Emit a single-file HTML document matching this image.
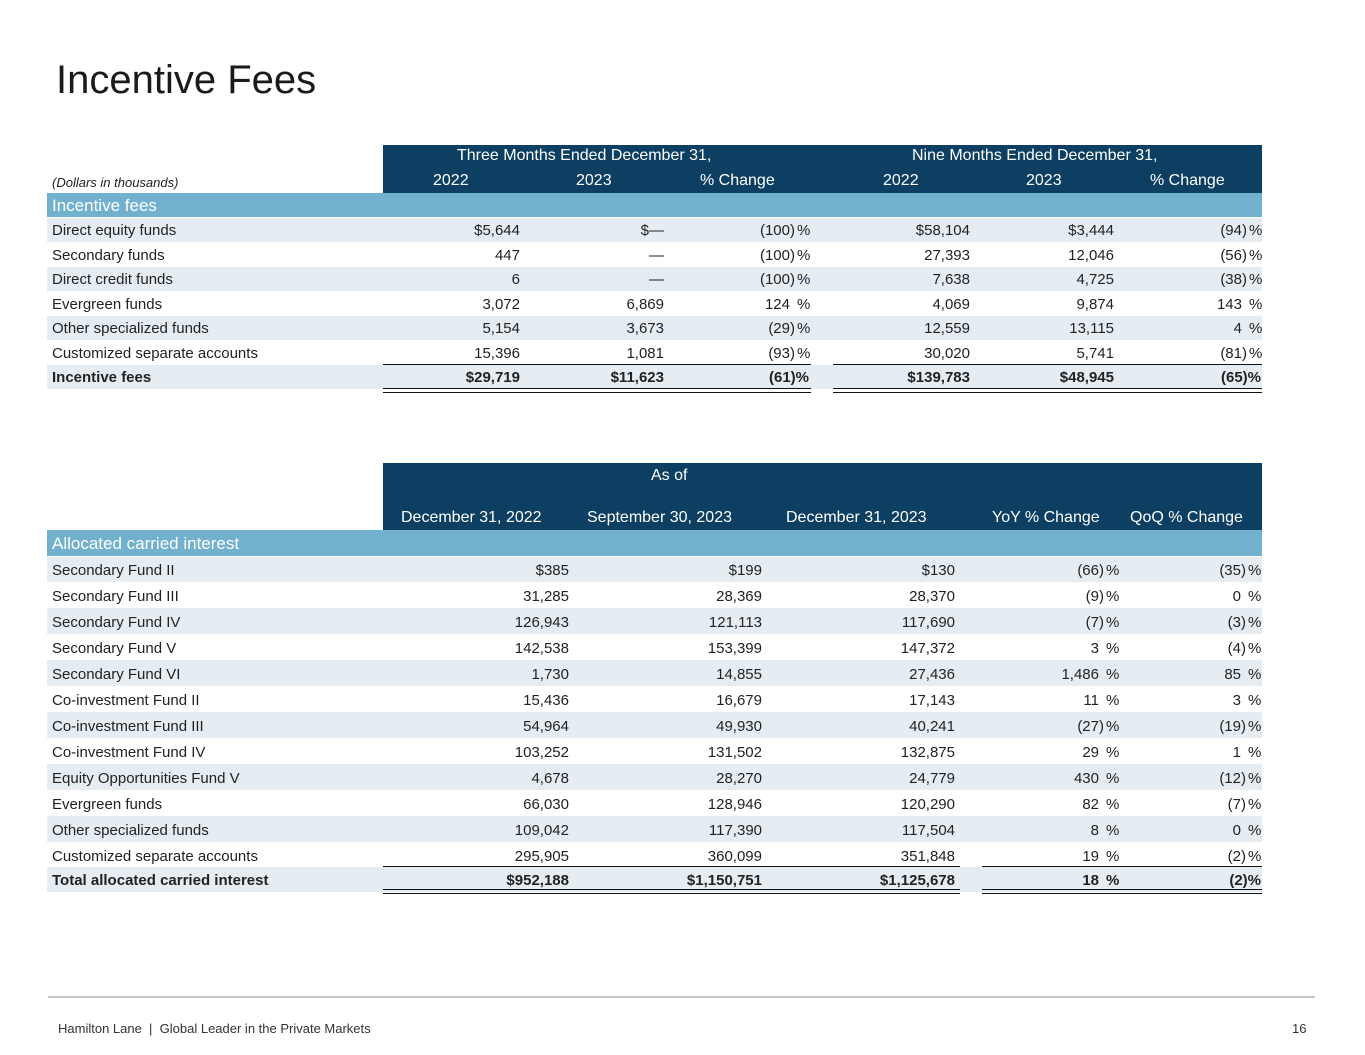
<!DOCTYPE html>
<html><head><meta charset="utf-8"><style>
*{margin:0;padding:0;box-sizing:border-box}
body{width:1365px;height:1055px;position:relative;background:#fff;font-family:"Liberation Sans",sans-serif;color:#222;overflow:hidden}
.a{position:absolute;white-space:nowrap}
.t{font-size:15px;line-height:1}
.nav{background:#0c3f61;color:#fff}
.sec{background:#72b1ce;color:#fff;font-size:17px}
.lt{background:#e5edf3}
.b{font-weight:bold}
.ln{position:absolute;height:0;border-top:1.5px solid #111}
.dl{position:absolute;height:5px;border-top:1.5px solid #111;border-bottom:1.5px solid #111}
.w{position:absolute;left:0;top:0;width:1365px;height:1055px}
</style></head><body>
<div class="w">
<div class="a" style="left:56px;top:58px;font-size:40px;color:#1a1a1a">Incentive Fees</div>

<div class="a nav" style="left:383px;top:145px;width:879px;height:48px"></div>
<div class="a t" style="left:457px;top:148px;color:#fff;font-size:16px">Three Months Ended December 31,</div>
<div class="a t" style="left:912px;top:148px;color:#fff;font-size:16px">Nine Months Ended December 31,</div>
<div class="a" style="left:52px;top:175px;font-size:13px;font-style:italic">(Dollars in thousands)</div>
<div class="a t" style="left:433px;top:173px;color:#fff;font-size:16px">2022</div>
<div class="a t" style="left:576px;top:173px;color:#fff;font-size:16px">2023</div>
<div class="a t" style="left:700px;top:173px;color:#fff;font-size:16px">% Change</div>
<div class="a t" style="left:883px;top:173px;color:#fff;font-size:16px">2022</div>
<div class="a t" style="left:1026px;top:173px;color:#fff;font-size:16px">2023</div>
<div class="a t" style="left:1150px;top:173px;color:#fff;font-size:16px">% Change</div>
<div class="a sec" style="left:47px;top:193px;width:1215px;height:24px;padding:3px 0 0 5px">Incentive fees</div>

<div class="a nav" style="left:383px;top:463px;width:879px;height:67px"></div>
<div class="a t" style="left:651px;top:468px;color:#fff;font-size:16px">As of</div>
<div class="a t" style="left:401px;top:510px;color:#fff;font-size:16px">December 31, 2022</div>
<div class="a t" style="left:587px;top:510px;color:#fff;font-size:16px">September 30, 2023</div>
<div class="a t" style="left:786px;top:510px;color:#fff;font-size:16px">December 31, 2023</div>
<div class="a t" style="left:992px;top:510px;color:#fff;font-size:16px">YoY % Change</div>
<div class="a t" style="left:1130px;top:510px;color:#fff;font-size:16px">QoQ % Change</div>
<div class="a sec" style="left:47px;top:530px;width:1215px;height:26px;padding:4px 0 0 5px">Allocated carried interest</div>

<div class="a" style="left:48px;top:996px;width:1267px;height:2px;background:#c8c8c8"></div>
<div class="a" style="left:58px;top:1021px;font-size:13px;color:#333">Hamilton Lane &nbsp;|&nbsp; Global Leader in the Private Markets</div>
<div class="a" style="left:1292px;top:1021px;font-size:13px;color:#333">16</div>

<div class="a lt" style="left:47px;top:218px;width:1215px;height:24px"></div>
<div class="a lt" style="left:47px;top:267px;width:1215px;height:24px"></div>
<div class="a lt" style="left:47px;top:316px;width:1215px;height:24px"></div>
<div class="a lt" style="left:47px;top:365px;width:1215px;height:24px"></div>

<div class="a lt" style="left:47px;top:557px;width:1215px;height:25px"></div>
<div class="a lt" style="left:47px;top:608px;width:1215px;height:26px"></div>
<div class="a lt" style="left:47px;top:660px;width:1215px;height:26px"></div>
<div class="a lt" style="left:47px;top:712px;width:1215px;height:26px"></div>
<div class="a lt" style="left:47px;top:764px;width:1215px;height:26px"></div>
<div class="a lt" style="left:47px;top:816px;width:1215px;height:26px"></div>
<div class="a lt" style="left:47px;top:867px;width:1215px;height:25px"></div>

<div class="ln" style="left:383px;top:364px;width:428px"></div>
<div class="ln" style="left:833px;top:364px;width:429px"></div>
<div class="dl" style="left:383px;top:388px;width:428px"></div>
<div class="dl" style="left:833px;top:388px;width:429px"></div>
<div class="ln" style="left:383px;top:866px;width:577px"></div>
<div class="ln" style="left:982px;top:866px;width:280px"></div>
<div class="dl" style="left:383px;top:889px;width:577px"></div>
<div class="dl" style="left:982px;top:889px;width:280px"></div>
</div>

<div class="w">
<div class="a t" style="left:52px;top:223px">Direct equity funds</div>
<div class="a t" style="right:845px;top:223px">$5,644</div><div class="a t" style="right:701px;top:223px">$—</div><div class="a t" style="right:570px;top:223px">(100)</div><div class="a t" style="left:797px;top:223px">%</div><div class="a t" style="right:395px;top:223px">$58,104</div><div class="a t" style="right:251px;top:223px">$3,444</div><div class="a t" style="right:118px;top:223px">(94)</div><div class="a t" style="left:1249px;top:223px">%</div>

<div class="a t" style="left:52px;top:248px">Secondary funds</div>
<div class="a t" style="right:845px;top:248px">447</div><div class="a t" style="right:701px;top:248px">—</div><div class="a t" style="right:570px;top:248px">(100)</div><div class="a t" style="left:797px;top:248px">%</div><div class="a t" style="right:395px;top:248px">27,393</div><div class="a t" style="right:251px;top:248px">12,046</div><div class="a t" style="right:118px;top:248px">(56)</div><div class="a t" style="left:1249px;top:248px">%</div>

<div class="a t" style="left:52px;top:272px">Direct credit funds</div>
<div class="a t" style="right:845px;top:272px">6</div><div class="a t" style="right:701px;top:272px">—</div><div class="a t" style="right:570px;top:272px">(100)</div><div class="a t" style="left:797px;top:272px">%</div><div class="a t" style="right:395px;top:272px">7,638</div><div class="a t" style="right:251px;top:272px">4,725</div><div class="a t" style="right:118px;top:272px">(38)</div><div class="a t" style="left:1249px;top:272px">%</div>

<div class="a t" style="left:52px;top:297px">Evergreen funds</div>
<div class="a t" style="right:845px;top:297px">3,072</div><div class="a t" style="right:701px;top:297px">6,869</div><div class="a t" style="right:575px;top:297px">124</div><div class="a t" style="left:797px;top:297px">%</div><div class="a t" style="right:395px;top:297px">4,069</div><div class="a t" style="right:251px;top:297px">9,874</div><div class="a t" style="right:123px;top:297px">143</div><div class="a t" style="left:1249px;top:297px">%</div>

<div class="a t" style="left:52px;top:321px">Other specialized funds</div>
<div class="a t" style="right:845px;top:321px">5,154</div><div class="a t" style="right:701px;top:321px">3,673</div><div class="a t" style="right:570px;top:321px">(29)</div><div class="a t" style="left:797px;top:321px">%</div><div class="a t" style="right:395px;top:321px">12,559</div><div class="a t" style="right:251px;top:321px">13,115</div><div class="a t" style="right:123px;top:321px">4</div><div class="a t" style="left:1249px;top:321px">%</div>

<div class="a t" style="left:52px;top:346px">Customized separate accounts</div>
<div class="a t" style="right:845px;top:346px">15,396</div><div class="a t" style="right:701px;top:346px">1,081</div><div class="a t" style="right:570px;top:346px">(93)</div><div class="a t" style="left:797px;top:346px">%</div><div class="a t" style="right:395px;top:346px">30,020</div><div class="a t" style="right:251px;top:346px">5,741</div><div class="a t" style="right:118px;top:346px">(81)</div><div class="a t" style="left:1249px;top:346px">%</div>

<div class="a t b" style="left:52px;top:370px">Incentive fees</div>
<div class="a t b" style="right:845px;top:370px">$29,719</div><div class="a t b" style="right:701px;top:370px">$11,623</div><div class="a t b" style="right:556px;top:370px">(61)%</div><div class="a t b" style="right:395px;top:370px">$139,783</div><div class="a t b" style="right:251px;top:370px">$48,945</div><div class="a t b" style="right:104px;top:370px">(65)%</div>

<div class="a t" style="left:52px;top:563px">Secondary Fund II</div><div class="a t" style="right:796px;top:563px">$385</div><div class="a t" style="right:603px;top:563px">$199</div><div class="a t" style="right:410px;top:563px">$130</div><div class="a t" style="right:261px;top:563px">(66)</div><div class="a t" style="left:1106px;top:563px">%</div><div class="a t" style="right:119px;top:563px">(35)</div><div class="a t" style="left:1248px;top:563px">%</div>
<div class="a t" style="left:52px;top:589px">Secondary Fund III</div><div class="a t" style="right:796px;top:589px">31,285</div><div class="a t" style="right:603px;top:589px">28,369</div><div class="a t" style="right:410px;top:589px">28,370</div><div class="a t" style="right:261px;top:589px">(9)</div><div class="a t" style="left:1106px;top:589px">%</div><div class="a t" style="right:124px;top:589px">0</div><div class="a t" style="left:1248px;top:589px">%</div>
<div class="a t" style="left:52px;top:615px">Secondary Fund IV</div><div class="a t" style="right:796px;top:615px">126,943</div><div class="a t" style="right:603px;top:615px">121,113</div><div class="a t" style="right:410px;top:615px">117,690</div><div class="a t" style="right:261px;top:615px">(7)</div><div class="a t" style="left:1106px;top:615px">%</div><div class="a t" style="right:119px;top:615px">(3)</div><div class="a t" style="left:1248px;top:615px">%</div>
<div class="a t" style="left:52px;top:641px">Secondary Fund V</div><div class="a t" style="right:796px;top:641px">142,538</div><div class="a t" style="right:603px;top:641px">153,399</div><div class="a t" style="right:410px;top:641px">147,372</div><div class="a t" style="right:266px;top:641px">3</div><div class="a t" style="left:1106px;top:641px">%</div><div class="a t" style="right:119px;top:641px">(4)</div><div class="a t" style="left:1248px;top:641px">%</div>
<div class="a t" style="left:52px;top:667px">Secondary Fund VI</div><div class="a t" style="right:796px;top:667px">1,730</div><div class="a t" style="right:603px;top:667px">14,855</div><div class="a t" style="right:410px;top:667px">27,436</div><div class="a t" style="right:266px;top:667px">1,486</div><div class="a t" style="left:1106px;top:667px">%</div><div class="a t" style="right:124px;top:667px">85</div><div class="a t" style="left:1248px;top:667px">%</div>
<div class="a t" style="left:52px;top:693px">Co-investment Fund II</div><div class="a t" style="right:796px;top:693px">15,436</div><div class="a t" style="right:603px;top:693px">16,679</div><div class="a t" style="right:410px;top:693px">17,143</div><div class="a t" style="right:266px;top:693px">11</div><div class="a t" style="left:1106px;top:693px">%</div><div class="a t" style="right:124px;top:693px">3</div><div class="a t" style="left:1248px;top:693px">%</div>
<div class="a t" style="left:52px;top:719px">Co-investment Fund III</div><div class="a t" style="right:796px;top:719px">54,964</div><div class="a t" style="right:603px;top:719px">49,930</div><div class="a t" style="right:410px;top:719px">40,241</div><div class="a t" style="right:261px;top:719px">(27)</div><div class="a t" style="left:1106px;top:719px">%</div><div class="a t" style="right:119px;top:719px">(19)</div><div class="a t" style="left:1248px;top:719px">%</div>
<div class="a t" style="left:52px;top:745px">Co-investment Fund IV</div><div class="a t" style="right:796px;top:745px">103,252</div><div class="a t" style="right:603px;top:745px">131,502</div><div class="a t" style="right:410px;top:745px">132,875</div><div class="a t" style="right:266px;top:745px">29</div><div class="a t" style="left:1106px;top:745px">%</div><div class="a t" style="right:124px;top:745px">1</div><div class="a t" style="left:1248px;top:745px">%</div>
<div class="a t" style="left:52px;top:771px">Equity Opportunities Fund V</div><div class="a t" style="right:796px;top:771px">4,678</div><div class="a t" style="right:603px;top:771px">28,270</div><div class="a t" style="right:410px;top:771px">24,779</div><div class="a t" style="right:266px;top:771px">430</div><div class="a t" style="left:1106px;top:771px">%</div><div class="a t" style="right:119px;top:771px">(12)</div><div class="a t" style="left:1248px;top:771px">%</div>
<div class="a t" style="left:52px;top:797px">Evergreen funds</div><div class="a t" style="right:796px;top:797px">66,030</div><div class="a t" style="right:603px;top:797px">128,946</div><div class="a t" style="right:410px;top:797px">120,290</div><div class="a t" style="right:266px;top:797px">82</div><div class="a t" style="left:1106px;top:797px">%</div><div class="a t" style="right:119px;top:797px">(7)</div><div class="a t" style="left:1248px;top:797px">%</div>
<div class="a t" style="left:52px;top:823px">Other specialized funds</div><div class="a t" style="right:796px;top:823px">109,042</div><div class="a t" style="right:603px;top:823px">117,390</div><div class="a t" style="right:410px;top:823px">117,504</div><div class="a t" style="right:266px;top:823px">8</div><div class="a t" style="left:1106px;top:823px">%</div><div class="a t" style="right:124px;top:823px">0</div><div class="a t" style="left:1248px;top:823px">%</div>
<div class="a t" style="left:52px;top:849px">Customized separate accounts</div><div class="a t" style="right:796px;top:849px">295,905</div><div class="a t" style="right:603px;top:849px">360,099</div><div class="a t" style="right:410px;top:849px">351,848</div><div class="a t" style="right:266px;top:849px">19</div><div class="a t" style="left:1106px;top:849px">%</div><div class="a t" style="right:119px;top:849px">(2)</div><div class="a t" style="left:1248px;top:849px">%</div>
<div class="a t b" style="left:52px;top:873px">Total allocated carried interest</div><div class="a t b" style="right:796px;top:873px">$952,188</div><div class="a t b" style="right:603px;top:873px">$1,150,751</div><div class="a t b" style="right:410px;top:873px">$1,125,678</div><div class="a t b" style="right:266px;top:873px">18</div><div class="a t b" style="left:1106px;top:873px">%</div><div class="a t b" style="right:104px;top:873px">(2)%</div>
</div>
</body></html>
